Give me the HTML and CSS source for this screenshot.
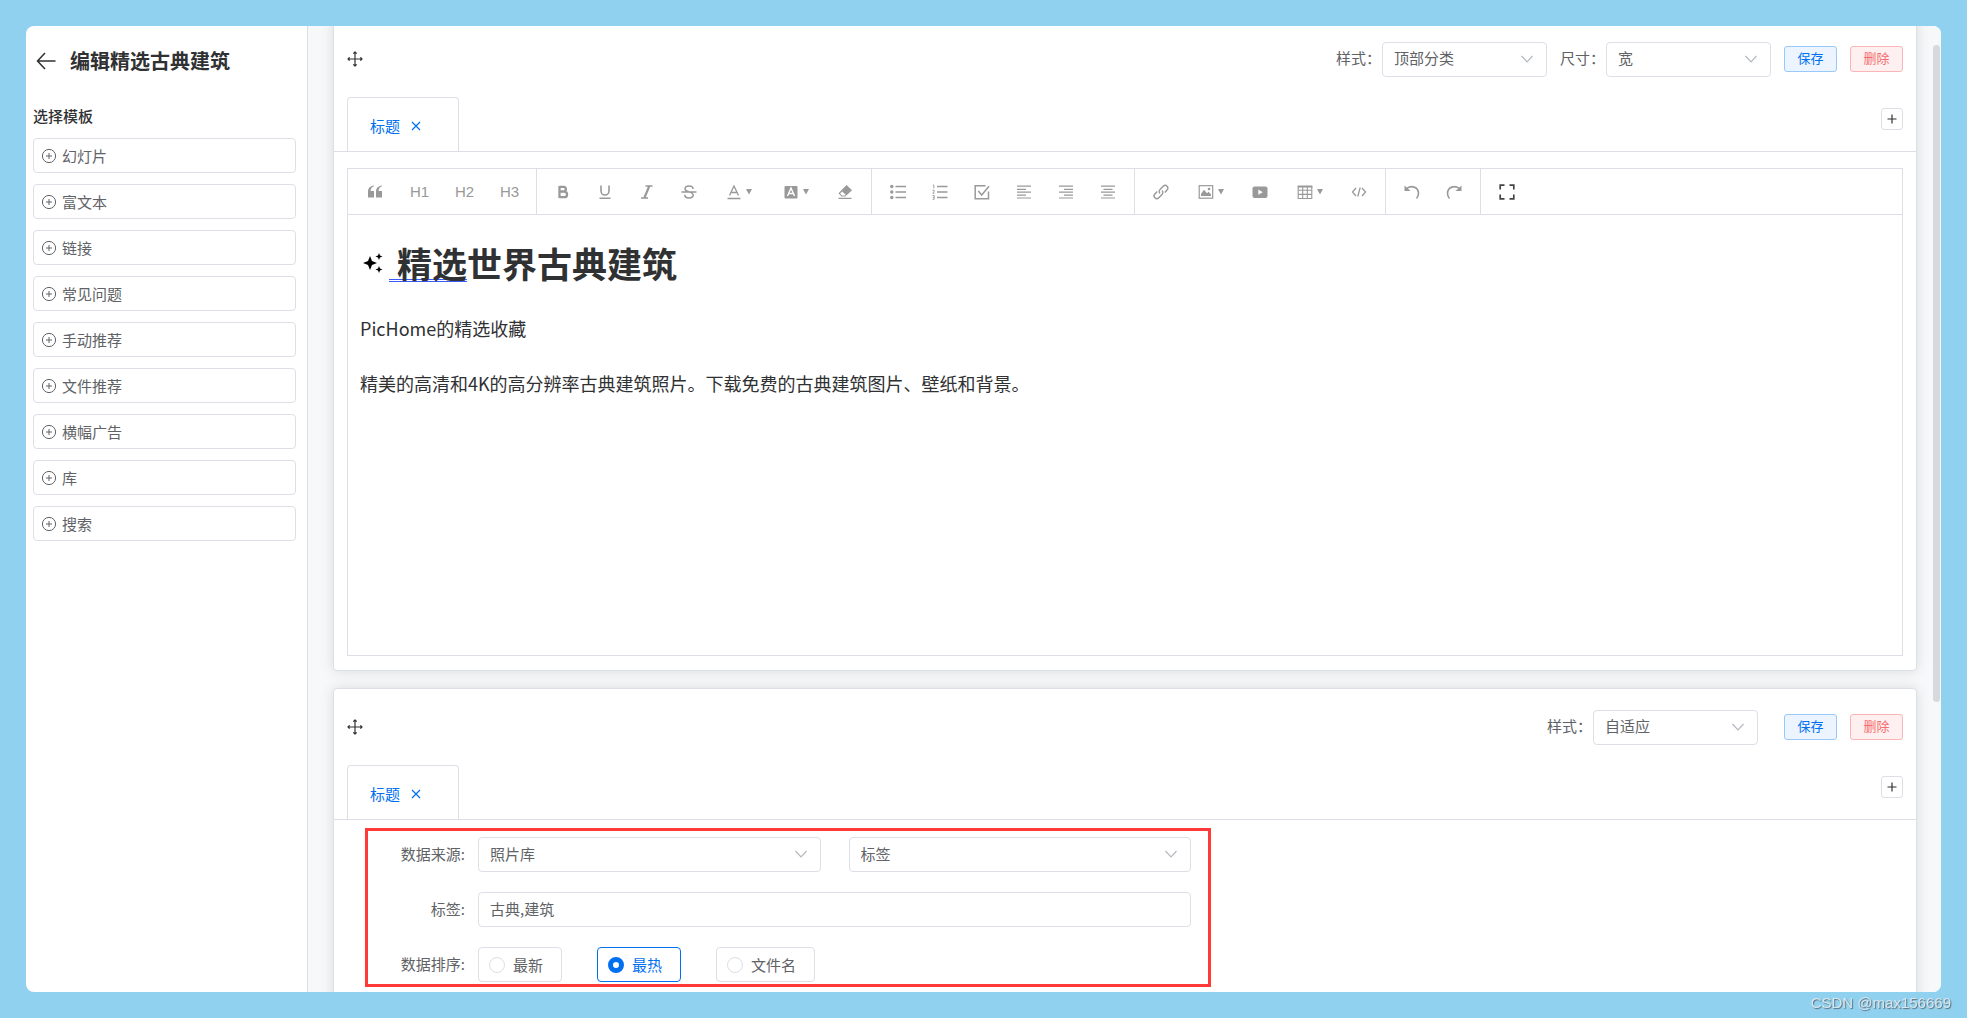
FILE: index.html
```html
<!DOCTYPE html>
<html lang="zh-CN">
<head>
<meta charset="utf-8">
<title>编辑精选古典建筑</title>
<meta name="viewport" content="width=device-width, initial-scale=1">
<link rel="stylesheet" href="styles.css">
</head>
<body>
<svg class="sprite" aria-hidden="true">
  <symbol id="plus-circle" viewBox="0 0 16 16"><g fill="none" stroke="currentColor"><circle cx="8" cy="8" r="6.6"/><path d="M8 5v6M5 8h6"/></g></symbol>
  <symbol id="move" viewBox="0 0 16 16"><g fill="none" stroke="currentColor" stroke-width="1.2" stroke-linejoin="round"><path d="M8 1v14M1 8h14M6.3 2.6L8 1l1.7 1.6M6.3 13.4L8 15l1.7-1.6M2.6 6.3L1 8l1.6 1.7M13.4 6.3L15 8l-1.6 1.7"/></g></symbol>
  <symbol id="close" viewBox="0 0 10 10"><path d="M1 1l8 8M9 1l-8 8" fill="none" stroke="currentColor" stroke-width="1.2"/></symbol>
  <symbol id="chevron" viewBox="0 0 14 14"><path d="M1.5 4L7 9.8 12.500 4" fill="none" stroke="currentColor" stroke-width="1.2"/></symbol>
  <symbol id="caret" viewBox="0 0 6 6"><path d="M0 0h6L3 5.500z" fill="currentColor"/></symbol>
</svg>
<div class="app">
  <aside class="sidebar">
    <header class="sidebar-head">
      <a class="back" href="#" aria-label="返回"><svg width="20" height="18" viewBox="0 0 20 18"><path d="M9 1L1.500 9 9 17M1.500 9H19.500" fill="none" stroke="currentColor" stroke-width="1.500"/></svg></a>
      <h1>编辑精选古典建筑</h1>
    </header>
    <h2>选择模板</h2>
    <div class="templates">
      <button type="button"><svg class="i16"><use href="#plus-circle"/></svg>幻灯片</button>
      <button type="button"><svg class="i16"><use href="#plus-circle"/></svg>富文本</button>
      <button type="button"><svg class="i16"><use href="#plus-circle"/></svg>链接</button>
      <button type="button"><svg class="i16"><use href="#plus-circle"/></svg>常见问题</button>
      <button type="button"><svg class="i16"><use href="#plus-circle"/></svg>手动推荐</button>
      <button type="button"><svg class="i16"><use href="#plus-circle"/></svg>文件推荐</button>
      <button type="button"><svg class="i16"><use href="#plus-circle"/></svg>横幅广告</button>
      <button type="button"><svg class="i16"><use href="#plus-circle"/></svg>库</button>
      <button type="button"><svg class="i16"><use href="#plus-circle"/></svg>搜索</button>
    </div>
  </aside>

  <main class="main">
    <section class="card">
      <header class="card-head">
        <svg class="i16 handle"><use href="#move"/></svg>
        <label for="style-1">样式：</label>
        <span class="select"><select id="style-1"><option>顶部分类</option></select><svg><use href="#chevron"/></svg></span>
        <label for="size-1">尺寸：</label>
        <span class="select"><select id="size-1"><option>宽</option></select><svg><use href="#chevron"/></svg></span>
        <button type="button" class="btn save">保存</button>
        <button type="button" class="btn delete">删除</button>
      </header>
      <nav class="tabs">
        <a class="tab" href="#">标题<svg><use href="#close"/></svg></a>
        <button type="button" class="add" aria-label="添加"><svg width="10" height="10" viewBox="0 0 10 10"><path d="M5 .5v9M.5 5h9" stroke="currentColor" stroke-width="1.200"/></svg></button>
      </nav>
      <div class="editor">
        <div class="toolbar">
          <div class="group headings">
            <button type="button" aria-label="引用"><svg class="i16" viewBox="0 0 16 16"><path d="M7 2.200C4.800 3 3.600 4.600 3.600 7H7v6.500H1V7.500C1 4.200 3.300 2 7 1.600zM15 2.200c-2.200.8-3.400 2.400-3.400 4.800H15v6.500H9V7.500C9 4.200 11.300 2 15 1.600z" fill="currentColor"/></svg></button>
            <button type="button">H1</button>
            <button type="button">H2</button>
            <button type="button">H3</button>
          </div>
          <div class="group">
            <button type="button" aria-label="粗体"><svg class="i16" viewBox="0 0 16 16"><path d="M4.500 2v12M4.500 2.800h4a2.300 2.300 0 0 1 0 4.700h-4M4.500 7.700h4.800a2.700 2.700 0 0 1 0 5.500H4.500" fill="none" stroke="currentColor" stroke-width="2.300"/></svg></button>
            <button type="button" aria-label="下划线"><svg class="i16" viewBox="0 0 16 16"><path d="M4 1.500V7a4 4 0 0 0 8 0V1.500M2.500 14.300h11" fill="none" stroke="currentColor" stroke-width="1.600"/></svg></button>
            <button type="button" aria-label="斜体"><svg class="i16" viewBox="0 0 16 16"><path d="M6.500 2h7M2 14h7" stroke="currentColor" stroke-width="1.300"/><path d="M10.300 2L5.300 14" stroke="currentColor" stroke-width="2.200"/></svg></button>
            <button type="button" aria-label="删除线"><svg class="i16" viewBox="0 0 16 16"><path d="M12 5C12 3 10.300 2 8 2S4 3 4 4.800 5.500 7.200 8 7.900s4.200 1.400 4.200 3.200S10.500 14 8 14s-4.300-1.200-4.300-3.200M.5 8h15" fill="none" stroke="currentColor" stroke-width="1.500"/></svg></button>
            <button type="button" class="wide" aria-label="文字颜色"><svg class="i16" viewBox="0 0 16 16"><path d="M3.500 11.500L8 2l4.500 9.500M5 8.500h6M1.500 14.500h13" fill="none" stroke="currentColor" stroke-width="1.300"/></svg><svg class="caret"><use href="#caret"/></svg></button>
            <button type="button" class="wide" aria-label="背景色"><svg class="i16" viewBox="0 0 16 16"><rect x="1.500" y="2" width="13" height="12.500" rx="1" fill="currentColor"/><path d="M4.500 12L8 4l3.500 8M5.800 9.500h4.400" fill="none" stroke="#fff" stroke-width="1.400"/></svg><svg class="caret"><use href="#caret"/></svg></button>
            <button type="button" aria-label="清除格式"><svg class="i16" viewBox="0 0 16 16"><path d="M9.500 1L15 6.200l-6.700 6.300H4.500L1.500 9.300z" fill="currentColor"/><path d="M5.300 7.600l3.500 3.300-.8.600H5L3 9.500z" fill="#fff"/><path d="M1.500 14.400h13" stroke="currentColor" stroke-width="1.300"/></svg></button>
          </div>
          <div class="group">
            <button type="button" aria-label="无序列表"><svg class="i16" viewBox="0 0 16 16"><path d="M5.500 2.500H16M5.500 8H16M5.500 13.500H16" stroke="currentColor" stroke-width="1.500"/><g fill="currentColor"><circle cx="1.800" cy="2.500" r="1.700"/><circle cx="1.800" cy="8" r="1.700"/><circle cx="1.800" cy="13.500" r="1.700"/></g></svg></button>
            <button type="button" aria-label="有序列表"><svg class="i16" viewBox="0 0 16 16"><path d="M5 2.500h10.500M5 8h10.500M5 13.500h10.500" stroke="currentColor" stroke-width="1.500"/><path d="M.8 1h1v3.500M.5 6.300h1.700v1L.8 9.200h1.700M.5 11.500h1.700v3.800H.5M.8 13.400h1.400" fill="none" stroke="currentColor" stroke-width=".9"/></svg></button>
            <button type="button" aria-label="待办"><svg class="i16" viewBox="0 0 16 16"><path d="M11.500 1.700H1.200v13h13.300V7.500M4.300 7l3.400 4L15 2.300" fill="none" stroke="currentColor" stroke-width="1.500"/></svg></button>
            <button type="button" aria-label="左对齐"><svg class="i16" viewBox="0 0 16 16"><path d="M1 2.200h14M1 5.300h9M1 8.200h14M1 11.200h9M1 14h14" stroke="currentColor" stroke-width="1.200"/></svg></button>
            <button type="button" aria-label="右对齐"><svg class="i16" viewBox="0 0 16 16"><path d="M1 2.200h14M6 5.300h9M1 8.200h14M6 11.200h9M1 14h14" stroke="currentColor" stroke-width="1.200"/></svg></button>
            <button type="button" aria-label="居中"><svg class="i16" viewBox="0 0 16 16"><path d="M1 2.200h14M3.500 5.300h9M1 8.200h14M3.500 11.200h9M1 14h14" stroke="currentColor" stroke-width="1.200"/></svg></button>
          </div>
          <div class="group">
            <button type="button" aria-label="链接"><svg class="i16" viewBox="0 0 16 16"><path d="M7 9.500a2.800 2.800 0 0 1 0-4l3.200-3.300a2.700 2.700 0 0 1 3.900 3.900l-2.300 2.400M9 6.500a2.800 2.800 0 0 1 0 4l-3.200 3.300a2.700 2.700 0 0 1-3.900-3.900l2.300-2.400" fill="none" stroke="currentColor" stroke-width="1.400"/></svg></button>
            <button type="button" class="wide" aria-label="图片"><svg class="i16" viewBox="0 0 16 16"><rect x="1.200" y="1.700" width="13.500" height="12.500" fill="none" stroke="currentColor" stroke-width="1.200"/><path d="M3 12V10l3-4.300 3 3.500 1.700-1.500L13 10.500V12z" fill="currentColor"/><circle cx="11" cy="5" r="1.300" fill="currentColor"/></svg><svg class="caret"><use href="#caret"/></svg></button>
            <button type="button" aria-label="视频"><svg class="i16" viewBox="0 0 16 16"><rect x=".5" y="2.500" width="15" height="11.500" rx="2" fill="currentColor"/><path d="M6.300 5.500v5.300l4.500-2.600z" fill="#fff"/></svg></button>
            <button type="button" class="wide" aria-label="表格"><svg class="i16" viewBox="0 0 16 16"><path d="M1.200 2.500h13.600v12H1.200zM1.200 6.300h13.600M1.200 10.400h13.600M5.700 3v11.500M10.300 3v11.500" fill="none" stroke="currentColor" stroke-width="1.100"/><path d="M.7 1.500h14.600v2H.7z" fill="currentColor"/></svg><svg class="caret"><use href="#caret"/></svg></button>
            <button type="button" aria-label="代码"><svg class="i16" viewBox="0 0 16 16"><path d="M5 4L1.500 8 5 12M11 4l3.500 4L11 12M9.200 3.500l-2.400 9" fill="none" stroke="currentColor" stroke-width="1.300"/></svg></button>
          </div>
          <div class="group">
            <button type="button" aria-label="撤销"><svg class="i16" viewBox="0 0 16 16"><path d="M2 5C7 .5 14.500 3 14.500 9.500c0 2-.8 3.700-2 5" fill="none" stroke="currentColor" stroke-width="1.600"/><path d="M.5 1.500v5.500h6z" fill="currentColor"/></svg></button>
            <button type="button" aria-label="重做"><svg class="i16" viewBox="0 0 16 16"><path d="M14 5C9 .5 1.500 3 1.500 9.500c0 2 .8 3.700 2 5" fill="none" stroke="currentColor" stroke-width="1.600"/><path d="M15.500 1.500v5.500h-6z" fill="currentColor"/></svg></button>
          </div>
          <div class="group">
            <button type="button" class="dark" aria-label="全屏"><svg class="i16" viewBox="0 0 16 16"><path d="M1.200 5.500V1.200H5.500M10.500 1.200h4.300v4.300M14.800 10.500v4.300h-4.300M5.500 14.800H1.200v-4.300" fill="none" stroke="currentColor" stroke-width="1.700"/></svg></button>
          </div>
        </div>
        <article class="content">
          <h2><svg width="20" height="20" viewBox="0 0 20 20"><path d="M7 3l2 5 5 2-5 2-2 5-2-5-5-2 5-2zM16 0l1 2.500 2.500 1-2.500 1L16 7l-1-2.500-2.500-1 2.500-1zM16 13l1 2.500 2.500 1-2.500 1L16 20l-1-2.500-2.500-1 2.500-1z" fill="#000"/></svg><span><span class="marked">&nbsp;精选</span>世界古典建筑</span></h2>
          <p>PicHome的精选收藏</p>
          <p>精美的高清和4K的高分辨率古典建筑照片。下载免费的古典建筑图片、壁纸和背景。</p>
        </article>
      </div>
    </section>

    <section class="card">
      <header class="card-head">
        <svg class="i16 handle"><use href="#move"/></svg>
        <label for="style-2">样式：</label>
        <span class="select last"><select id="style-2"><option>自适应</option></select><svg><use href="#chevron"/></svg></span>
        <button type="button" class="btn save">保存</button>
        <button type="button" class="btn delete">删除</button>
      </header>
      <nav class="tabs">
        <a class="tab" href="#">标题<svg><use href="#close"/></svg></a>
        <button type="button" class="add" aria-label="添加"><svg width="10" height="10" viewBox="0 0 10 10"><path d="M5 .5v9M.5 5h9" stroke="currentColor" stroke-width="1.200"/></svg></button>
      </nav>
      <form class="source">
        <label for="source">数据来源:</label>
        <div class="fields">
          <span class="select"><select id="source"><option>照片库</option></select><svg><use href="#chevron"/></svg></span>
          <span class="select"><select aria-label="来源类型"><option>标签</option></select><svg><use href="#chevron"/></svg></span>
        </div>
        <label for="tags">标签:</label>
        <input class="text" id="tags" type="text" value="古典,建筑">
        <span class="label" id="sort-label">数据排序:</span>
        <div class="radios" role="radiogroup" aria-labelledby="sort-label">
          <label><input type="radio" name="sort">最新</label>
          <label><input type="radio" name="sort" checked>最热</label>
          <label><input type="radio" name="sort">文件名</label>
        </div>
      </form>
    </section>
    <div class="scroll-thumb"></div>
  </main>
</div>
<div class="watermark">CSDN @max156669</div>
</body>
</html>
```

FILE: styles.css
```css
* { box-sizing: border-box; }

:root {
  --line: #dcdfe6;
  --text: #606266;
  --dark: #303133;
  --blue: #0070f0;
}

body {
  margin: 0;
  height: 100vh;
  padding: 26px;
  background: #90d1f0;
  color: var(--text);
  font: 15px/20px "Noto Sans CJK SC", sans-serif;
  overflow: hidden;
}

button, input, select { font: inherit; color: inherit; margin: 0; }
button { cursor: pointer; }
svg { flex: none; display: block; }
.sprite { position: absolute; width: 0; height: 0; }
.i16 { width: 16px; height: 16px; }

.app {
  display: flex;
  height: 100%;
  border-radius: 8px;
  overflow: hidden;
  background: #fff;
}

/* Sidebar */
.sidebar {
  flex: none;
  width: 282px;
  padding: 20px 11px 0 7px;
  border-right: 1px solid var(--line);
}
.sidebar-head { display: flex; align-items: center; gap: 14px; height: 30px; padding-left: 3px; }
.back { color: var(--dark); }
.sidebar h1 { margin: 0; font-size: 20px; line-height: 30px; color: var(--dark); }
.sidebar h2 { margin: 30px 0 12px; font-size: 15px; font-weight: 500; line-height: 20px; color: var(--dark); }
.templates { display: flex; flex-direction: column; gap: 11px; }
.templates button {
  display: flex;
  align-items: center;
  gap: 5px;
  height: 35px;
  padding: 0 7px;
  border: 1px solid var(--line);
  border-radius: 4px;
  background: #fff;
}

/* Main column */
.main {
  position: relative;
  flex: 1;
  min-width: 0;
  padding: 0 24px 0 25px;
  background: #f7f8fa;
  overflow: hidden;
}
.card {
  margin-bottom: 17px;
  border: 1px solid var(--line);
  border-radius: 4px;
  background: #fff;
  box-shadow: 0 0 13px rgba(0, 0, 0, .12);
}
.card:first-child { margin-top: -6px; }

.card-head {
  display: flex;
  align-items: center;
  height: 76px;
  padding: 0 13px;
}
.card-head label { padding: 0 1px 2px 0; }
.handle { margin-right: auto; color: var(--dark); }

.select { position: relative; display: block; width: 165px; margin-right: 13px; }
.select.last { margin-right: 26px; }
.select select, .text {
  display: block;
  width: 100%;
  height: 35px;
  padding: 0 11px 2px;
  border: 1px solid var(--line);
  border-radius: 4px;
  background: #fff;
  appearance: none;
  outline: 0;
}
.select svg {
  position: absolute;
  right: 13px;
  top: 10px;
  width: 14px;
  height: 14px;
  color: #b4b8bf;
  pointer-events: none;
}

.btn {
  width: 53px;
  height: 26px;
  padding: 0 0 2px;
  border: 1px solid;
  border-radius: 3px;
  font-size: 13px;
  line-height: 20px;
}
.save { border-color: #99c9fa; background: #ebf4ff; color: var(--blue); margin-right: 13px; }
.delete { border-color: #fab6b6; background: #fef0f0; color: #f56c6c; }

.tabs {
  display: flex;
  justify-content: space-between;
  align-items: flex-start;
  padding: 0 13px;
  border-bottom: 1px solid var(--line);
}
.tab {
  display: flex;
  align-items: center;
  gap: 11px;
  width: 112px;
  height: 54px;
  padding: 2px 0 0 22px;
  border: 1px solid var(--line);
  border-bottom: 0;
  border-radius: 4px 4px 0 0;
  color: var(--blue);
  text-decoration: none;
}
.tab svg { width: 10px; height: 10px; }
.add {
  display: grid;
  place-items: center;
  width: 22px;
  height: 22px;
  margin-top: 11px;
  padding: 0;
  border: 1px solid var(--line);
  border-radius: 3px;
  background: #fff;
  color: var(--dark);
}

/* Rich text editor */
.editor { margin: 16px 13px 14px; border: 1px solid var(--line); min-height: 488px; }
.toolbar { display: flex; height: 46px; border-bottom: 1px solid var(--line); }
.group { display: flex; padding: 0 5px; border-right: 1px solid var(--line); }
.group:last-child { border-right: 0; }
.group button {
  display: flex;
  align-items: center;
  justify-content: center;
  width: 42px;
  padding: 0;
  border: 0;
  background: none;
  color: #999;
}
.group.headings { padding: 0 4px; }
.headings button { width: 45px; font-family: "Liberation Sans", sans-serif; }
.group .wide { width: 57px; gap: 4px; }
.group .dark { color: #444; }
.caret { width: 6px; height: 6px; }

.content { padding: 22px 12px; color: var(--dark); }
.content h2 { display: flex; align-items: center; gap: 6px; margin: 0; padding-left: 3px; font-size: 35px; line-height: 52px; }
.marked { text-decoration: underline double #3a5cff 1px; text-underline-offset: 1px; }
.content p { margin: 23px 0 0; font-size: 18px; line-height: 32px; }

/* Data source form */
.source {
  display: grid;
  grid-template-columns: 97px minmax(0, 1fr);
  align-items: center;
  gap: 20px 13px;
  width: 54%;
  max-width: 846px;
  margin: 8px 0 60px 31px;
  padding: 6px 17px 2px 0;
  border: 3px solid #ff3838;
}
.source > label, .source > .label { padding-bottom: 2px; text-align: right; }
.fields { display: grid; grid-template-columns: 1fr 1fr; gap: 28px; }
.fields .select { width: auto; margin: 0; }
.radios { display: flex; gap: 35px; }
.radios label {
  display: flex;
  align-items: center;
  gap: 8px;
  height: 35px;
  padding: 0 18px 0 10px;
  border: 1px solid var(--line);
  border-radius: 4px;
}
.radios label:has(:checked) { border-color: var(--blue); color: var(--blue); }
.radios input {
  appearance: none;
  width: 16px;
  height: 16px;
  border: 1px solid var(--line);
  border-radius: 50%;
}
.radios input:checked { border: 5px solid var(--blue); }

.scroll-thumb {
  position: absolute;
  top: 19px;
  right: 1px;
  width: 7px;
  height: 68%;
  border-radius: 4px;
  background: #d7d9dc;
}
.watermark {
  position: fixed;
  right: 16px;
  bottom: 5px;
  color: #d5e6ee;
  font: 15px/20px "Liberation Sans", sans-serif;
  text-shadow: 1px 1px 1px #5d6f79;
}
```
